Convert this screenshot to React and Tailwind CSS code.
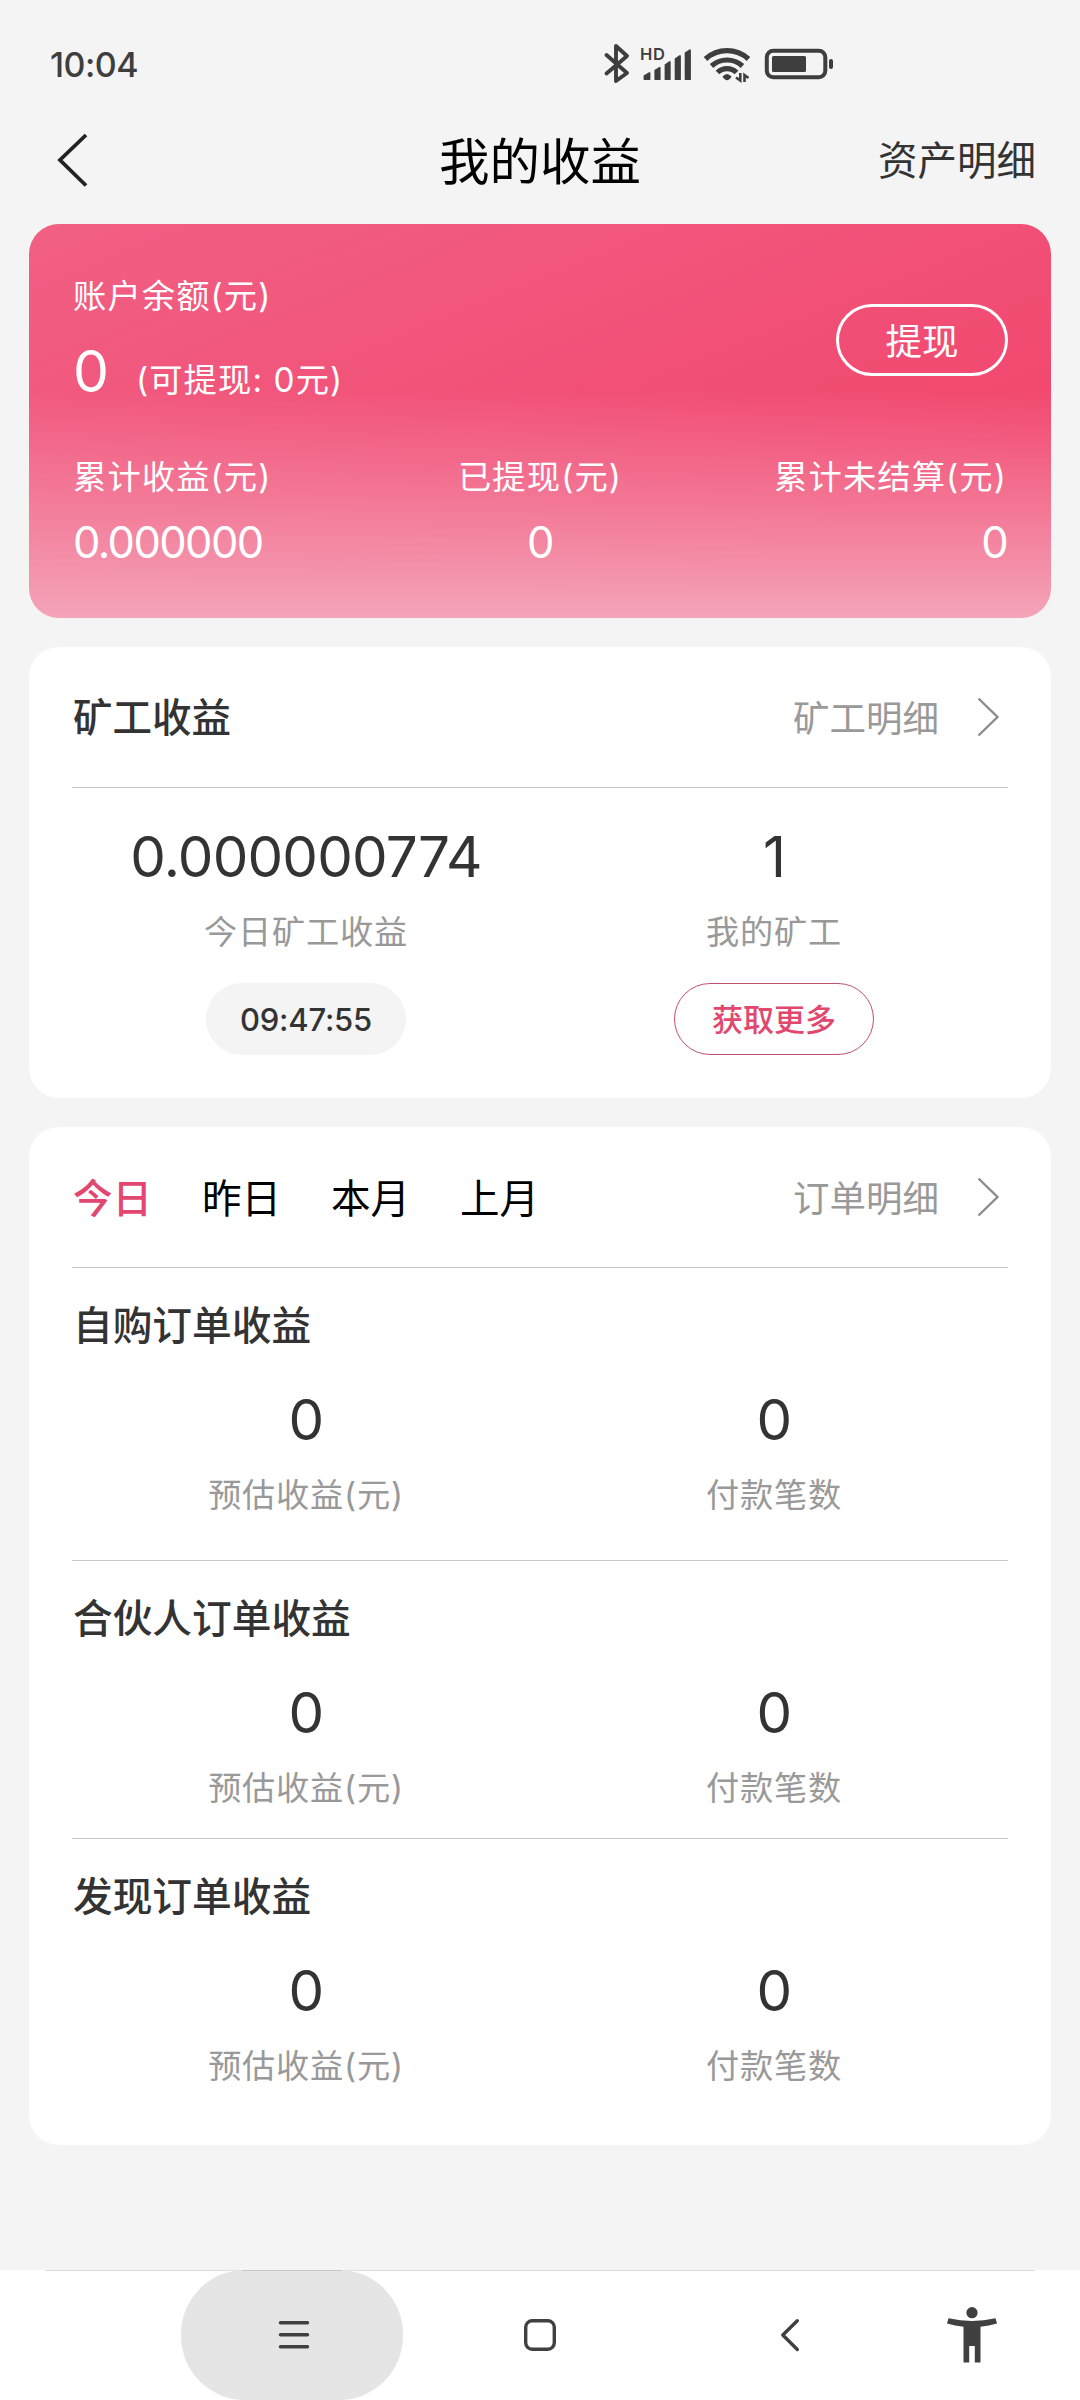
import { useState } from 'react'

const ORDER_TABS = ['今日', '昨日', '本月', '上月']

const ORDER_SECTIONS = [
  { title: '自购订单收益', income: '0', count: '0', className: 'h-[293px]' },
  { title: '合伙人订单收益', income: '0', count: '0', className: 'h-[278px]' },
  { title: '发现订单收益', income: '0', count: '0', className: 'h-[278px]' },
]

function StatusIcons() {
  return (
    <svg width="240" height="48" viewBox="600 40 240 48" fill="none">
      {/* bluetooth */}
      <path
        d="M606.5 55 L627 73 L616 81 V46 L627 56 L606.5 73.5"
        stroke="#3e3e3e"
        strokeWidth="3.9"
        strokeLinejoin="round"
        strokeLinecap="round"
      />
      <text
        x="640"
        y="60"
        fill="#3e3e3e"
        fontSize="16.5"
        fontWeight="600"
        textLength="25"
        fontFamily="Inter, sans-serif"
      >
        HD
      </text>
      {/* signal */}
      <g fill="#3e3e3e" stroke="#3e3e3e" strokeWidth="1.8" strokeLinejoin="round">
        <path d="M644.5 76 L649.5 73 V79.2 H644.5 Z" />
        <path d="M655.3 70.5 L659.7 67.8 V79.2 H655.3 Z" />
        <path d="M665.5 65 L669.8 62 V79.2 H665.5 Z" />
        <path d="M675.6 59 L680 56 V79.2 H675.6 Z" />
        <path d="M685.6 53 L690 50.2 V79.2 H685.6 Z" />
      </g>
      {/* wifi */}
      <g stroke="#3e3e3e" strokeWidth="5.2">
        <path d="M705.5 59 A32 32 0 0 1 748.5 59" />
        <path d="M711.5 66 A23 23 0 0 1 742.5 66" />
        <path d="M717.5 72.5 A13.5 13.5 0 0 1 736.5 72.5" />
      </g>
      <path d="M722.5 76.5 Q727 71.5 731.5 76.5 Q727 84 722.5 76.5 Z" fill="#3e3e3e" />
      <path d="M740.3 73 V80.5 L736 77.5 M744.5 82 V75 L748.5 78" stroke="#3e3e3e" strokeWidth="2.6" />
      {/* battery */}
      <rect x="766.8" y="50.8" width="58.5" height="26.4" rx="6.5" stroke="#3e3e3e" strokeWidth="4" />
      <rect x="772" y="56" width="34" height="16" rx="1.5" fill="#3e3e3e" />
      <rect x="829" y="59" width="4" height="10" rx="2" fill="#3e3e3e" />
    </svg>
  )
}

function ChevronRight() {
  return (
    <svg className="ml-[38px] mr-2" width="23" height="40" viewBox="0 0 23 40" fill="none">
      <path d="M1.5 1.5 L20.5 20 L1.5 38.5" stroke="#8c8c8c" strokeWidth="2.4" />
    </svg>
  )
}

function MoreLink({ children }) {
  return (
    <button type="button" className="flex items-center text-[36.5px] text-[#999]">
      <span className="pt-1">{children}</span>
      <ChevronRight />
    </button>
  )
}

function Stat({ value, label }) {
  return (
    <div className="flex flex-1 flex-col items-center">
      <p className="flex h-[60px] items-center pt-0.5 text-[56.5px] tracking-[-0.8px] text-[#333]">{value}</p>
      <p className="mt-[26px] flex h-10 items-center pt-0.5 text-[33.2px] tracking-[0.8px] text-[#999]">{label}</p>
    </div>
  )
}

function BalanceItem({ label, value, className }) {
  return (
    <div className={`flex flex-1 flex-col ${className}`}>
      <p className="flex h-11 items-center pt-px text-[33.3px] tracking-[1.1px] whitespace-nowrap">{label}</p>
      <p className="mt-[21px] flex h-11 items-center pt-px text-[43.5px] tracking-[-1.6px]">{value}</p>
    </div>
  )
}

function App() {
  const [activeTab, setActiveTab] = useState('今日')

  return (
    <div className="flex h-[2400px] w-[1080px] flex-col bg-[#f4f4f4] font-['Inter','Noto_Sans_CJK_SC',sans-serif] leading-none">
      <div className="flex h-24 items-center pt-8 pl-[50px]">
        <span className="w-[550px] pt-0.5 text-[34px] font-medium tracking-[-0.5px] text-[#3e3e3e]">10:04</span>
        <StatusIcons />
      </div>

      <header className="grid h-32 grid-cols-3 items-center px-[45px]">
        <svg className="ml-[11px]" width="34" height="56" viewBox="0 0 34 56" fill="none">
          <path d="M30 3 L4 28 L30 53.5" stroke="#222" strokeWidth="3.8" />
        </svg>
        <h1 className="pt-1 text-center text-[50.5px] whitespace-nowrap text-black">我的收益</h1>
        <span className="-mr-px pt-1 text-right text-[39.5px] text-[#333]">资产明细</span>
      </header>

      <main className="flex flex-1 flex-col gap-[29px] px-[29px]">
        <section className="h-[394px] rounded-[30px] bg-[linear-gradient(180deg,rgba(244,164,185,0)_42%,rgba(244,164,185,1)_100%),linear-gradient(158deg,#f16084_0%,#f2466e_78%)] px-[44px] pt-[50px] text-white">
          <div className="flex items-center justify-between">
            <div>
              <p className="flex h-11 items-center pt-0.5 text-[33.3px] tracking-[1.1px]">账户余额(元)</p>
              <div className="flex h-[88px] items-baseline pt-[25px]">
                <span className="text-[57px]">0</span>
                <span className="ml-[27px] text-[33.3px] tracking-[1.1px]">(可提现: 0元)</span>
              </div>
            </div>
            <button type="button" className="-mr-px h-[72px] w-[172px] rounded-full border-[3px] border-white pt-[5px] text-[36.5px]">
              提现
            </button>
          </div>
          <div className="mt-[49px] flex">
            <BalanceItem label="累计收益(元)" value="0.000000" className="items-start" />
            <BalanceItem label="已提现(元)" value="0" className="items-center" />
            <BalanceItem label="累计未结算(元)" value="0" className="items-end" />
          </div>
        </section>

        <section className="h-[451px] rounded-[30px] bg-white px-[43px]">
          <div className="flex h-[141px] items-center justify-between border-b border-[#c8c8c8]">
            <h2 className="pt-1 pl-px text-[39.5px] font-medium text-[#333]">矿工收益</h2>
            <MoreLink>矿工明细</MoreLink>
          </div>
          <div className="flex pt-[38px]">
            <Stat value="0.000000774" label="今日矿工收益" />
            <Stat value="1" label="我的矿工" />
          </div>
          <div className="mt-[31px] flex">
            <div className="flex flex-1 justify-center">
              <span className="flex h-[72px] w-[200px] items-center justify-center rounded-full bg-[#f4f4f4] pt-px text-[31px] font-medium tracking-[-0.2px] text-[#333]">
                09:47:55
              </span>
            </div>
            <div className="flex flex-1 justify-center">
              <button type="button" className="h-[72px] w-[200px] rounded-full border border-[#c0506f] pt-px text-[31px] font-medium text-[#e2476f]">
                获取更多
              </button>
            </div>
          </div>
        </section>

        <section className="h-[1018px] rounded-[30px] bg-white px-[43px]">
          <div className="flex h-[141px] items-center justify-between border-b border-[#c8c8c8]">
            <div className="flex gap-[50px] pt-[5px] pl-px">
              {ORDER_TABS.map((tab) => (
                <button
                  key={tab}
                  type="button"
                  onClick={() => setActiveTab(tab)}
                  className={`text-[39.5px] ${activeTab === tab ? 'font-medium text-[#e2476f]' : 'text-black'}`}
                >
                  {tab}
                </button>
              ))}
            </div>
            <MoreLink>订单明细</MoreLink>
          </div>
          {ORDER_SECTIONS.map((section) => (
            <div
              key={section.title}
              className={`border-b border-[#c8c8c8] pt-[34px] last:border-b-0 ${section.className}`}
            >
              <h2 className="flex h-12 items-center pt-0.5 pl-px text-[39.7px] font-medium text-[#333]">{section.title}</h2>
              <div className="mt-[39px] flex">
                <Stat value={section.income} label="预估收益(元)" />
                <Stat value={section.count} label="付款笔数" />
              </div>
            </div>
          ))}
        </section>
      </main>

      <nav className="h-[130px] bg-white">
        <svg width="1080" height="130" viewBox="0 2270 1080 130" fill="none">
          <path d="M45 2270.5 H1035" stroke="#dedede" />
          <rect x="181" y="2270" width="222" height="130" rx="64" fill="#e5e5e5" />
          <path d="M242 2270.5 H342" stroke="#c6c6c6" />
          <path
            d="M280.5 2322.7 H307.5 M280.5 2334.7 H307.5 M280.5 2346.7 H307.5"
            stroke="#404040"
            strokeWidth="3.5"
            strokeLinecap="round"
          />
          <rect x="525.7" y="2320.7" width="28.6" height="28.6" rx="6.5" stroke="#404040" strokeWidth="3.4" />
          <path
            d="M797.3 2320.7 L782.8 2335 L797.3 2349.5"
            stroke="#404040"
            strokeWidth="3.4"
            strokeLinecap="round"
            strokeLinejoin="round"
          />
          <circle cx="972" cy="2312.7" r="5.6" fill="#404040" />
          <path
            d="M948.5 2318.3 Q972 2323.5 995.5 2318.3 L997 2323.6 Q989 2326 980.5 2326.7 V2362.5 H974.8 V2346 H969.2 V2362.5 H963.5 V2326.7 Q955 2326 947 2323.6 Z"
            fill="#404040"
          />
        </svg>
      </nav>
    </div>
  )
}

export default App
